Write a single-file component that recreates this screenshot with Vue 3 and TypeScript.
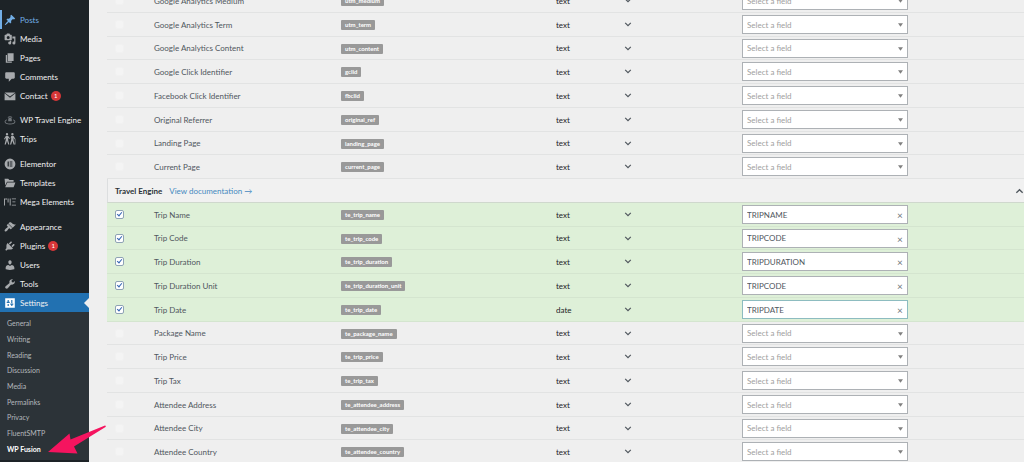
<script setup lang="ts">
import { reactive, ref } from 'vue'

interface MenuItem {
  label: string
  icon: string
  count?: number
  state?: 'hover' | 'current'
}

interface FieldRow {
  id: string
  name: string
  key: string
  type: string
  field: string
}

const row = (name: string, key: string, field = '', type = 'text'): FieldRow => ({ id: key, name, key, type, field })

const icons: Record<string, string> = {
  pin: 'M10.44 3.02l1.82-1.82 6.36 6.35-1.83 1.82c-1.05-.68-2.48-.57-3.41.36l-.75.75c-.92.93-1.04 2.35-.35 3.41l-1.83 1.82-2.41-2.41-2.8 2.79c-.42.42-3.38 2.71-3.8 2.29s1.86-3.39 2.28-3.81l2.79-2.79L4.1 9.36l1.83-1.82c1.05.69 2.48.57 3.4-.36l.75-.75c.93-.92 1.05-2.35.36-3.41z',
  media: 'M13 11V4c0-.55-.45-1-1-1h-1.670L9 1H5L3.670 3H2c-.55 0-1 .45-1 1v7c0 .55.45 1 1 1h10c.55 0 1-.45 1-1zM7 5a2.500 2.500 0 1 1 0 5 2.500 2.500 0 0 1 0-5zM14 6h5v10.500a2.500 2.500 0 1 1-2-2.450V9h-3zM10 14.050V13h2v3.500a2.500 2.500 0 1 1-2-2.450z',
  pages: 'M6 15V2h10v13zM5 16h8v2H3V5h2z',
  comments: 'M4 2h12c1.1 0 2 .9 2 2v7c0 1.1-.9 2-2 2h-3l-5 5v-5H4c-1.100 0-2-.9-2-2V4c0-1.100.9-2 2-2z',
  mail: 'M1 4h18L10 11zM1 5.6V17h18V5.600L10 12.800z',
  globe: 'M6 6a4.500 4.500 0 0 1 8 0l-1 .8a3.300 3.300 0 0 0-6 0zM7 9a3 3 0 0 1 6 0v3H7zM1 13c0-2 2-3.500 4-4v1.500c-2 .7-2.500 1.500-2.500 2.500 0 2 3 3 7.500 3s7.500-1 7.500-3c0-1-.5-1.800-2.500-2.500V9c2 .5 4 2 4 4 0 3-4 4.500-9 4.500S1 16 1 13z',
  hikers: 'M5 0a2 2 0 1 1 0 4 2 2 0 0 1 0-4zM3 5h4l3 4-1 1-2-2v4l2 7H7l-2-6-2 6H1l2-8V8l-2 3-1-1zM14 0a2 2 0 1 1 0 4 2 2 0 0 1 0-4zM12 5h4l3 5v9h-1V11l-2-3v4l2 7h-2l-2-6-2 6h-2l2-8V8l-1 1z',
  elementor: 'M10 1a9 9 0 1 1 0 18 9 9 0 0 1 0-18zM6 6v8h2V6zM9.500 6v1.700H14V6zM9.500 9.200v1.700H14V9.200zM9.500 12.300V14H14v-1.700z',
  folder: 'M1 3h6l2 2h7v3H5l-3 6zM5.500 9H19l-3 8H2z',
  mega: 'M0 4h1.600v12H0zM2 4h3v2H2zM6 4h1.600v7H6zM9.500 4h1.600v12H9.500zM13 4h7v1.600h-7zM14 9h5v1.600h-5zM13 14.400h7V16h-7z',
  brush: 'M14.480 11.060L7.410 3.990l1.500-1.500c.5-.56 2.300-.47 3.510.32 1.210.8 1.430 1.280 2.910 2.100 1.180.64 2.450 1.260 4.450.85zm-.71.71L6.700 4.700 4.930 6.470c-.39.39-.39 1.020 0 1.410l1.060 1.060c.39.39.39 1.030 0 1.420-.6.6-1.430 1.110-2.210 1.690-.35.26-.7.53-1.010.84C1.430 14.230.4 16.080 1.400 17.070c.99 1 2.840-.03 4.180-1.360.31-.31.58-.66.85-1.020.57-.78 1.080-1.610 1.690-2.210.39-.39 1.020-.39 1.410 0l1.060 1.060c.39.39 1.020.39 1.410 0z',
  plug: 'M13.110 4.360L9.870 7.600 8 5.730l3.240-3.240c.35-.34 1.050-.2 1.560.32.52.51.66 1.210.31 1.550zm-8 1.770l.91-1.120 9.010 9.010-1.190.84c-.71.71-2.630 1.160-3.820 1.160H6.140L4.900 17.260c-.59.59-1.540.59-2.120 0-.59-.58-.59-1.530 0-2.120l1.240-1.240v-3.880c0-1.130.4-3.190 1.090-3.890zm7.260 3.970l3.240-3.240c.34-.35 1.040-.21 1.550.31.52.51.66 1.210.31 1.550l-3.240 3.250z',
  user: 'M10 9.250c-2.270 0-2.730-3.440-2.730-3.440C7 4.020 7.820 2 9.970 2c2.160 0 2.980 2.020 2.710 3.810 0 0-.41 3.440-2.680 3.440zm0 2.570L12.720 10c2.390 0 4.520 2.330 4.520 4.530v2.490s-3.650 1.130-7.240 1.130c-3.650 0-7.240-1.130-7.240-1.130v-2.490c0-2.250 1.940-4.480 4.470-4.480z',
  wrench: 'M16.680 9.770c-1.340 1.340-3.300 1.670-4.950.99l-5.410 6.520c-.99.99-2.590.99-3.580 0s-.99-2.590 0-3.570l6.520-5.420c-.68-1.650-.35-3.610.99-4.950 1.280-1.280 3.120-1.620 4.720-1.060l-2.890 2.890 2.820 2.820 2.860-2.870c.53 1.580.18 3.390-1.080 4.650z',
  sliders: 'M2 2h16v16H2zM6 5v3H4.500v2h5V8H8V5zM6 11.500V15h2v-3.500zM12 5v5h2V5zM10.500 11v2H12v2h2v-2h1.500v-2z',
}

const menu: MenuItem[][] = [
  [
    { label: 'Posts', icon: 'pin', state: 'hover' },
    { label: 'Media', icon: 'media' },
    { label: 'Pages', icon: 'pages' },
    { label: 'Comments', icon: 'comments' },
    { label: 'Contact', icon: 'mail', count: 1 },
  ],
  [
    { label: 'WP Travel Engine', icon: 'globe' },
    { label: 'Trips', icon: 'hikers' },
  ],
  [
    { label: 'Elementor', icon: 'elementor' },
    { label: 'Templates', icon: 'folder' },
    { label: 'Mega Elements', icon: 'mega' },
  ],
  [
    { label: 'Appearance', icon: 'brush' },
    { label: 'Plugins', icon: 'plug', count: 1 },
    { label: 'Users', icon: 'user' },
    { label: 'Tools', icon: 'wrench' },
    { label: 'Settings', icon: 'sliders', state: 'current' },
  ],
]

const submenu = ['General', 'Writing', 'Reading', 'Discussion', 'Media', 'Permalinks', 'Privacy', 'FluentSMTP', 'WP Fusion']

const groups = reactive([
  {
    title: '',
    rows: [
      row('Google Analytics Medium', 'utm_medium'),
      row('Google Analytics Term', 'utm_term'),
      row('Google Analytics Content', 'utm_content'),
      row('Google Click Identifier', 'gclid'),
      row('Facebook Click Identifier', 'fbclid'),
      row('Original Referrer', 'original_ref'),
      row('Landing Page', 'landing_page'),
      row('Current Page', 'current_page'),
    ],
  },
  {
    title: 'Travel Engine',
    rows: [
      row('Trip Name', 'te_trip_name', 'TRIPNAME'),
      row('Trip Code', 'te_trip_code', 'TRIPCODE'),
      row('Trip Duration', 'te_trip_duration', 'TRIPDURATION'),
      row('Trip Duration Unit', 'te_trip_duration_unit', 'TRIPCODE'),
      row('Trip Date', 'te_trip_date', 'TRIPDATE', 'date'),
      row('Package Name', 'te_package_name'),
      row('Trip Price', 'te_trip_price'),
      row('Trip Tax', 'te_trip_tax'),
      row('Attendee Address', 'te_attendee_address'),
      row('Attendee City', 'te_attendee_city'),
      row('Attendee Country', 'te_attendee_country'),
    ],
  },
])

const fieldNames = ['TRIPNAME', 'TRIPCODE', 'TRIPDURATION', 'TRIPDATE']
const open = ref(true)
const focused = 'te_trip_date'
</script>

<template>
  <div class="admin">
    <nav class="sidebar" aria-label="Main menu">
      <ul v-for="(section, s) in menu" :key="s" class="section">
        <li v-for="item in section" :key="item.label">
          <a href="#" class="item" :class="item.state">
            <svg class="icon" :class="item.icon" viewBox="0 0 20 20" aria-hidden="true">
              <path :d="icons[item.icon]" fill="currentColor" fill-rule="evenodd" />
            </svg>
            <span>{{ item.label }}</span>
            <span v-if="item.count" class="count">{{ item.count }}</span>
          </a>
        </li>
      </ul>
      <ul class="submenu">
        <li v-for="label in submenu" :key="label">
          <a href="#" :class="{ active: label === 'WP Fusion' }">{{ label }}</a>
        </li>
      </ul>
    </nav>

    <main class="content">
      <table class="fields">
        <colgroup>
          <col class="c-check" />
          <col class="c-name" />
          <col class="c-key" />
          <col class="c-type" />
          <col />
        </colgroup>
        <tbody v-for="group in groups" :key="group.title">
          <tr v-if="group.title" class="group">
            <th colspan="5" scope="colgroup">
              <div class="group-bar">
                <span>{{ group.title }}</span>
                <a href="#">View documentation →</a>
                <button type="button" aria-label="Toggle Travel Engine" :aria-expanded="open" @click="open = !open">
                  <svg viewBox="0 0 10 6" aria-hidden="true"><path d="M1.500 5L5 1.500 8.500 5" /></svg>
                </button>
              </div>
            </th>
          </tr>
          <template v-if="!group.title || open">
            <tr v-for="r in group.rows" :key="r.id" :class="{ mapped: r.field }">
              <td class="check">
                <input :id="r.id" type="checkbox" :checked="!!r.field" :disabled="!r.field" />
              </td>
              <td><label :for="r.id">{{ r.name }}</label></td>
              <td><code>{{ r.key }}</code></td>
              <td>
                <div class="type">
                  <select v-model="r.type" :aria-label="r.name + ' type'">
                    <option>text</option>
                    <option>date</option>
                  </select>
                  <svg viewBox="0 0 10 6" aria-hidden="true"><path d="M1.500 1L5 4.500 8.500 1" /></svg>
                </div>
              </td>
              <td>
                <div class="picker" :class="{ focused: r.id === focused }">
                  <select v-model="r.field" :class="{ empty: !r.field }" :aria-label="r.name + ' field'">
                    <option value="">Select a field</option>
                    <option v-for="f in fieldNames" :key="f">{{ f }}</option>
                  </select>
                  <button v-if="r.field" type="button" :aria-label="'Clear ' + r.name" @click="r.field = ''">×</button>
                  <svg v-else viewBox="0 0 6 4" aria-hidden="true"><path d="M0 0h6L3 4z" /></svg>
                </div>
              </td>
            </tr>
          </template>
        </tbody>
      </table>
    </main>

    <svg class="pointer" viewBox="0 0 60 30" aria-hidden="true">
      <path d="M0 27L21.500 8.500L22.500 14.500L57 .5Q58.500 .8 57.500 2L26 21.500L29.500 28.500Z" />
    </svg>
  </div>
</template>

<style>
body {
  margin: 0;
  background: #efefef;
}
</style>

<style scoped>
.admin {
  position: relative;
  display: flex;
  height: 100vh;
  overflow: hidden;
  font-family: Lato, "Noto Sans", sans-serif;
  font-size: 8px;
  line-height: 12px;
  color: #50575e;
}

ul {
  list-style: none;
  margin: 0;
  padding: 0;
}

a {
  text-decoration: none;
}

.sidebar {
  flex: none;
  width: 89px;
  padding-top: 10px;
  background: #1d2327;
}

.section {
  margin-bottom: 6px;
}

.section:nth-of-type(1) {
  margin-bottom: 5px;
}

.section:nth-of-type(4) {
  margin-bottom: 0;
}

.item {
  position: relative;
  display: flex;
  align-items: center;
  height: 19px;
  padding-left: 4px;
  color: #f0f0f1;
  white-space: nowrap;
}

.icon {
  flex: none;
  width: 12px;
  height: 12px;
  margin-right: 4px;
  color: #a7aaad;
}

.icon.globe {
  color: #72777c;
}

.hover,
.hover .icon {
  color: #72aee6;
}

.hover {
  box-shadow: inset 2px 0 #72aee6;
}

.current {
  background: #2271b1;
}

.current .icon {
  color: #fff;
}

.current::after {
  content: "";
  position: absolute;
  right: 0;
  top: 5px;
  border: 5px solid transparent;
  border-left-width: 0;
  border-right-color: #efefef;
}

.count {
  width: 10px;
  height: 10px;
  margin-left: 3px;
  border-radius: 5px;
  background: #d63638;
  color: #fff;
  font-size: 6px;
  line-height: 10px;
  text-align: center;
}

.submenu {
  padding: 3px 0 4px;
  background: #2c3338;
}

.submenu a {
  display: block;
  height: 16px;
  padding-left: 7px;
  font-size: 7px;
  line-height: 16px;
  color: #b4b8bc;
}

.submenu li:nth-child(3n) a {
  height: 15px;
}

.submenu .active {
  color: #fff;
  font-weight: 700;
}

.content {
  flex: 1;
  min-width: 0;
  padding-left: 18px;
}

.fields {
  width: 100%;
  margin-top: -11px;
  table-layout: fixed;
  border-collapse: separate;
  border-spacing: 0;
}

.c-check { width: 47px; }
.c-name { width: 187px; }
.c-key { width: 215px; }
.c-type { width: 186px; }

tr {
  height: 24px;
}

tr:nth-child(4n + 3) {
  height: 23px;
}

td,
th {
  box-sizing: border-box;
  padding: 0;
  border-bottom: 1px solid #e2e3e3;
  text-align: left;
  vertical-align: middle;
}

.mapped td {
  background: #def0d8;
  border-bottom-color: #d4e5cf;
}

.group th {
  border-left: 1px solid #dcdedf;
  border-bottom-color: #cfd8cd;
  background: #f1f1f1;
}

.group-bar {
  display: flex;
  align-items: center;
  gap: 7px;
  padding-left: 7px;
  color: #2c3338;
}

.group-bar a {
  color: #4589c0;
  font-weight: 400;
}

.group-bar button {
  display: flex;
  margin-left: auto;
  padding: 0;
  border: 0;
  background: none;
}

.group-bar svg {
  width: 9px;
  height: 6px;
  fill: none;
  stroke: #50575e;
  stroke-width: 1.5;
}

.check {
  line-height: 0;
}

input {
  appearance: none;
  box-sizing: border-box;
  display: block;
  width: 9px;
  height: 9px;
  margin: 0 0 0 8px;
  border: 1px solid #f1f1f1;
  border-radius: 2px;
  background: #f4f4f4;
}

input:checked {
  position: relative;
  border-color: #8fa3b5;
  background: #fff;
}

input:checked::before {
  content: "";
  position: absolute;
  left: 2px;
  top: 0;
  width: 2px;
  height: 4px;
  border: solid #3465b4;
  border-width: 0 1px 1px 0;
  transform: rotate(40deg);
}

code {
  display: inline-block;
  padding: 0 4px;
  border-radius: 1px;
  background: #999;
  color: #fff;
  font-family: Lato, "Noto Sans", sans-serif;
  font-size: 6px;
  font-weight: 700;
  line-height: 10px;
  vertical-align: middle;
}

select {
  appearance: none;
  box-sizing: border-box;
  width: 100%;
  margin: 0;
  border: 0;
  border-radius: 0;
  background: none;
  font: inherit;
  color: #50575e;
}

.type {
  display: flex;
  align-items: center;
  width: 76px;
}

.type select {
  padding: 0;
  color: #1d2327;
}

.type svg {
  flex: none;
  width: 8px;
  height: 5px;
  fill: none;
  stroke: #50575e;
  stroke-width: 1.5;
}

.picker {
  position: relative;
  width: 166px;
}

.picker select {
  display: block;
  height: 19px;
  padding: 0 16px 0 4px;
  border: 1px solid #adb1b5;
  background: #fff;
}

.picker .empty {
  color: #a0a0a0;
}

.focused select {
  border-color: #8dbcc0;
}

.picker button {
  position: absolute;
  right: 4px;
  top: 4px;
  width: 8px;
  padding: 0;
  border: 0;
  background: none;
  font: inherit;
  font-size: 10px;
  color: #70757a;
}

.picker svg {
  position: absolute;
  right: 5px;
  top: 8px;
  width: 5px;
  height: 4px;
  fill: #808080;
}

.pointer {
  position: absolute;
  left: 48px;
  top: 425px;
  width: 60px;
  height: 30px;
  fill: #f5145f;
}
</style>
